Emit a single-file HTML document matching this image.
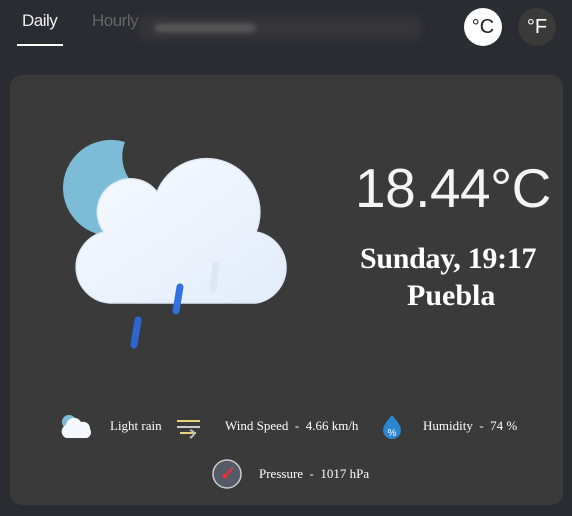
<!DOCTYPE html>
<html><head><style>
body{margin:0;width:572px;height:516px;background:#2b2b32;overflow:hidden;font-family:"Liberation Sans",sans-serif;position:relative}
.a{position:absolute}
.serif{font-family:"Liberation Serif",serif;color:#fff}
</style></head><body>
<div class="a" style="left:22px;top:11px;font-size:17px;color:#eee;letter-spacing:-0.5px">Daily</div>
<div class="a" style="left:17px;top:44px;width:46px;height:2px;background:#fff"></div>
<div class="a" style="left:92px;top:11px;font-size:17px;color:#666;letter-spacing:-0.5px">Hourly</div>
<div class="a" style="left:140px;top:16px;width:280px;height:24px;background:#36363a;filter:blur(4px)"></div>
<div class="a" style="left:155px;top:24px;width:100px;height:8px;background:#5a5a5a;filter:blur(3px)"></div>
<div class="a" style="left:464px;top:8px;width:38px;height:38px;border-radius:50%;background:#fff;color:#222;font-size:20px;text-align:center;line-height:38px">°C</div>
<div class="a" style="left:518px;top:8px;width:38px;height:38px;border-radius:50%;background:#3a3a3a;color:#fff;font-size:20px;text-align:center;line-height:38px">°F</div>
<div class="a" style="left:10px;top:75px;width:553px;height:430px;border-radius:12px;background:#3a3a3a"></div>
<svg class="a" style="left:0;top:0" width="572" height="516">
<defs><linearGradient id="cg" x1="0" y1="0" x2="1" y2="1"><stop offset="0" stop-color="#f7faff"/><stop offset="1" stop-color="#e2ecf9"/></linearGradient></defs>
<path d="M125 142 A48 48 0 1 0 130 232 L130 180 A40 40 0 0 1 125 142Z" fill="#7dbcd6"/>
<g fill="url(#cg)" stroke="#dfe8f3" stroke-width="1.5">
<path d="M110 303 A36 36 0 0 1 104 232 A33 33 0 0 1 157 192 A50 50 0 0 1 256 232 A36 36 0 0 1 256 303 Z"/>
</g>
<g stroke-linecap="round" stroke-width="7">
<line x1="180" y1="287" x2="176" y2="311" stroke="#2f72e0"/>
<line x1="138" y1="320" x2="134" y2="345" stroke="#2c66cf"/>
<line x1="216" y1="265" x2="213" y2="289" stroke="#dde6f3"/>
</g>
<circle cx="69" cy="422" r="7" fill="#7dbcd6"/>
<path d="M66 438 a7 7 0 0 1 0-13 a8 8 0 0 1 15-3 a7 7 0 0 1 9 7 a6 6 0 0 1-3 9z" fill="#f4f7fb"/>
<g stroke="#ccc" stroke-width="2"><line x1="177" y1="421" x2="200" y2="421" stroke="#e8d27a"/><line x1="177" y1="427" x2="200" y2="427"/><line x1="180" y1="433" x2="196" y2="433" stroke="#e8d27a"/></g>
<path d="M190 430 q8 3 0 8" fill="none" stroke="#bbb" stroke-width="2"/>
<path d="M392 415 q-9 10-9 15 a9 9 0 0 0 18 0 q0-5-9-15z" fill="#2a86d0"/>
<text x="392" y="436" font-size="10" fill="#fff" text-anchor="middle" font-family="Liberation Sans">%</text>
<circle cx="227" cy="474" r="14" fill="#555b66" stroke="#ccc" stroke-width="1.5"/>
<line x1="225" y1="476" x2="233" y2="468" stroke="#e33" stroke-width="2"/><circle cx="225" cy="476" r="2.5" fill="#e33"/>
</svg>
<div class="a" style="left:355px;top:156px;font-size:55px;color:#f4f4f4;font-weight:300;letter-spacing:-0.5px">18.44°C</div>
<div class="a serif" style="left:360px;top:242px;font-size:30px;font-weight:bold;letter-spacing:-0.3px">Sunday, 19:17</div>
<div class="a serif" style="left:407px;top:279px;font-size:30px;font-weight:bold">Puebla</div>
<div class="a serif" style="left:110px;top:418px;font-size:13px">Light rain</div>
<div class="a serif" style="left:225px;top:418px;font-size:13px;white-space:pre">Wind Speed  -  4.66 km/h</div>
<div class="a serif" style="left:423px;top:418px;font-size:13px;white-space:pre">Humidity  -  74 %</div>
<div class="a serif" style="left:259px;top:466px;font-size:13px;white-space:pre">Pressure  -  1017 hPa</div>
</body></html>
